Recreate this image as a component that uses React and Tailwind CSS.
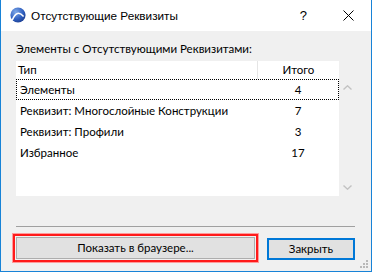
import React from "react";

const rows = [
  ["Элементы", "4"],
  ["Реквизит: Многослойные Конструкции", "7"],
  ["Реквизит: Профили", "3"],
  ["Избранное", "17"],
];

function Logo() {
  return (
    <svg width="16" height="16" viewBox="0 0 16 16">
      <defs>
        <radialGradient id="g" cx="0.35" cy="0.3" r="0.8">
          <stop offset="0" stopColor="#7fa9e8" />
          <stop offset="0.6" stopColor="#2f5fc0" />
          <stop offset="1" stopColor="#1b3a8a" />
        </radialGradient>
      </defs>
      <circle cx="8" cy="8" r="7.6" fill="url(#g)" />
      <path d="M2.2 13.2 Q 7 1.5 13.6 9.5" stroke="#fff" strokeWidth="1.6" fill="none" />
    </svg>
  );
}

export default function App() {
  return (
    <div
      className="w-[372px] h-[272px] bg-[#f0f0f0] border-x border-b border-[#1883d7] flex flex-col text-[11.5px] text-black relative overflow-hidden"
      style={{ fontFamily: 'Lato, "Liberation Sans", Arial, sans-serif' }}
    >
      <div
        className="h-[31px] bg-white flex items-center shrink-0"
        style={{ fontFamily: '"Liberation Sans", Arial, sans-serif' }}
      >
        <div className="ml-[9px] mt-[-1px]">
          <Logo />
        </div>
        <div className="ml-[5px] leading-[16px] text-[11.75px]">Отсутствующие Реквизиты</div>
        <div className="ml-auto mr-[36px] text-[13px] leading-[16px]">?</div>
        <svg width="11" height="11" viewBox="0 0 11 11" className="mr-[17px]">
          <path d="M0.5 0.5 L10.5 10.5 M10.5 0.5 L0.5 10.5" stroke="#000" strokeWidth="1" />
        </svg>
      </div>
      <div className="px-[15px] flex flex-col">
        <div className="pt-[10px] leading-[16px]">Элементы с Отсутствующими Реквизитами:</div>
        <div className="mt-[4px] flex h-[135px]">
          <div className="w-[323px] bg-white flex flex-col">
            <div className="h-[18px] flex items-center">
              <div className="w-[242px] pl-[2px] border-r border-[#e5e5e5] h-full flex items-center">Тип</div>
              <div className="flex-1 text-center">Итого</div>
            </div>
            {rows.map(([a, b], i) => (
              <div
                key={i}
                className={
                  "h-[21px] flex items-center " +
                  (i === 0 ? "border border-dotted border-black" : "border border-transparent")
                }
              >
                <div className="w-[241px] pl-[3px]">{a}</div>
                <div className="flex-1 text-center">{b}</div>
              </div>
            ))}
          </div>
          <div className="w-[16px] flex flex-col items-center justify-between py-[24px] pb-[6px]">
            <svg width="9" height="5" viewBox="0 0 9 5">
              <path d="M0.5 4.5 L4.5 0.8 L8.5 4.5" stroke="#c2c2c2" strokeWidth="1.4" fill="none" />
            </svg>
            <svg width="9" height="5" viewBox="0 0 9 5">
              <path d="M0.5 0.5 L4.5 4.2 L8.5 0.5" stroke="#c2c2c2" strokeWidth="1.4" fill="none" />
            </svg>
          </div>
        </div>
        <div className="mt-[30px] h-px bg-[#a0a0a0] w-[339px]"></div>
        <div className="mt-[8px] flex items-center">
          <div className="ml-[-3px] border-2 border-[#ff1a1a] outline outline-1 outline-[#ff9a9a] p-[1px] -mt-[1px]">
            <div className="w-[239px] h-[22px] border border-[#adadad] bg-[#e1e1e1] flex items-center justify-center leading-[16px]">
              Показать в браузере...
            </div>
          </div>
          <div className="ml-[9px] w-[88px] h-[22px] border-2 border-[#0078d7] bg-[#e1e1e1] flex items-center justify-center leading-[16px]">
            Закрыть
          </div>
        </div>
      </div>
      <svg width="10" height="10" viewBox="0 0 10 10" className="absolute right-[2px] bottom-[2px]">
        {[[8, 2], [8, 5], [8, 8], [5, 5], [5, 8], [2, 8]].map(([x, y], i) => (
          <rect key={i} x={x - 1} y={y - 1} width="2" height="2" fill="#b8b8b8" />
        ))}
      </svg>
    </div>
  );
}
